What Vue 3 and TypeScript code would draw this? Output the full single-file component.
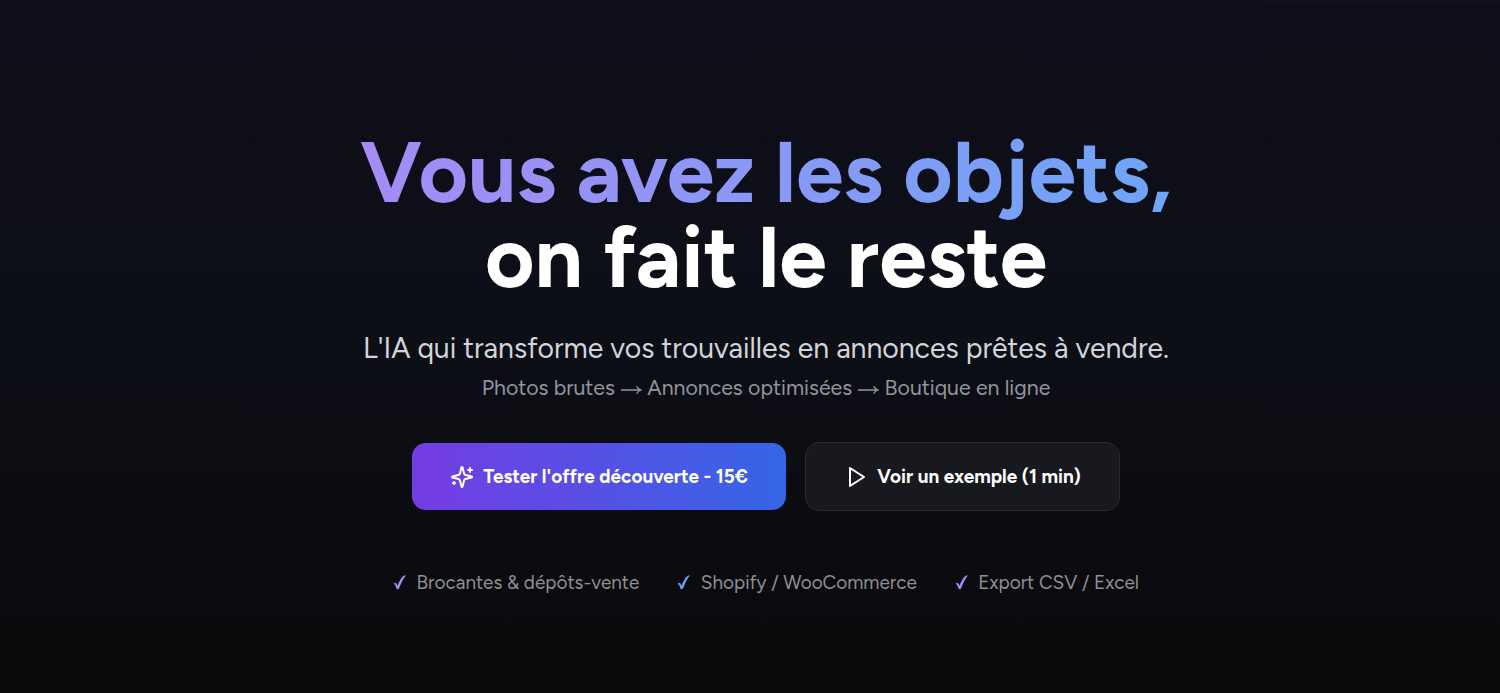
<template>
  <section class="hero">
    <div class="hero-nav-edge"></div>
    <div class="hero-content">
      <h1 class="hero-title">
        <span class="hero-title-accent">Vous avez les objets,</span>
        <span class="hero-title-main">on fait le reste</span>
      </h1>

      <p class="hero-lead">L'IA qui transforme vos trouvailles en annonces prêtes à vendre.</p>
      <p class="hero-steps">
        <template v-for="(step, index) in steps" :key="step">
          <svg v-if="index > 0" class="hero-arrow" viewBox="0 0 22 12" fill="none" stroke="currentColor" stroke-width="1.3">
            <path d="M1 6H20.8M16.6 2.4C17.6 4.2 19 5.4 21 6C19 6.6 17.6 7.8 16.6 9.6" />
          </svg>
          <span>{{ step }}</span>
        </template>
      </p>

      <div class="hero-actions">
        <button class="btn btn-primary" type="button">
          <svg class="btn-icon" viewBox="0 0 24 24" fill="none" stroke="currentColor" stroke-width="2" stroke-linecap="round" stroke-linejoin="round">
            <path d="M9.937 15.5A2 2 0 0 0 8.5 14.063l-6.135-1.582a.5.5 0 0 1 0-.962L8.5 9.936A2 2 0 0 0 9.937 8.5l1.582-6.135a.5.5 0 0 1 .963 0L14.063 8.5A2 2 0 0 0 15.5 9.937l6.135 1.581a.5.5 0 0 1 0 .964L15.5 14.063a2 2 0 0 0-1.437 1.437l-1.582 6.135a.5.5 0 0 1-.963 0z" />
            <path d="M20 3v4M22 5h-4M4 17v2M5 18H3" />
          </svg>
          <span>Tester l'offre découverte - 15€</span>
        </button>
        <button class="btn btn-secondary" type="button">
          <svg class="btn-icon" viewBox="0 0 24 24" fill="none" stroke="currentColor" stroke-width="2" stroke-linecap="round" stroke-linejoin="round">
            <path d="M6 3l14 9-14 9V3z" />
          </svg>
          <span>Voir un exemple (1 min)</span>
        </button>
      </div>

      <ul class="hero-features">
        <li v-for="feature in features" :key="feature.label" class="hero-feature">
          <svg class="hero-check" :class="feature.tone" viewBox="0 0 13 15" fill="currentColor">
            <path d="M0.6 8.6C1.8 7.5 3.2 7.8 3.8 9.1L4.5 10.7C6.2 6.2 8.4 2.6 10.4 0.9C11.1 0.4 11.9 0.4 12.8 0.5C9.9 4.2 7.8 8.7 6 13.5C5.5 14.3 4.4 14.4 3.7 14C3 11.7 2.2 9.8 0.6 8.6Z" />
          </svg>
          <span>{{ feature.label }}</span>
        </li>
      </ul>
    </div>
  </section>
</template>

<script setup lang="ts">
interface Feature {
  label: string
  tone: "violet" | "blue"
}

const steps: string[] = ["Photos brutes", "Annonces optimisées", "Boutique en ligne"]

const features: Feature[] = [
  { label: "Brocantes & dépôts-vente", tone: "violet" },
  { label: "Shopify / WooCommerce", tone: "blue" },
  { label: "Export CSV / Excel", tone: "violet" },
]
</script>

<style>
body {
  margin: 0;
  background: #09090b;
}
</style>

<style scoped>
.hero {
  position: relative;
  box-sizing: border-box;
  height: 693px;
  padding: 130px 0 0 32px;
  overflow: hidden;
  background: linear-gradient(180deg, #0f0d19 0%, #0d0f18 40%, #0c0d12 68%, #0a0a0c 100%);
  color: #fff;
  font-family: Figtree, Lato, "Open Sans", sans-serif;
}

.hero-nav-edge {
  position: absolute;
  top: 0;
  right: 0;
  width: 235px;
  height: 5px;
  background: #130f20;
}

.hero-content {
  display: flex;
  flex-direction: column;
  align-items: center;
  white-space: nowrap;
}

.hero-title {
  display: flex;
  flex-direction: column;
  align-items: center;
  margin: 0;
  font-size: 85.3px;
  line-height: 85.3px;
  font-weight: 700;
}

/* extra room below so the clipped background covers the "j" descender */
.hero-title-accent {
  padding-bottom: 8px;
  margin-bottom: -8px;
  background: linear-gradient(90deg, #a58bf6, #6ea5f6);
  background-clip: text;
  -webkit-background-clip: text;
  color: transparent;
}

.hero-lead {
  margin: 27.2px 0 0;
  color: #d1d5db;
  font-size: 28.4px;
  line-height: 40px;
}

.hero-steps {
  display: flex;
  align-items: center;
  gap: 5.2px;
  margin: 4.4px 0 0;
  color: #9096a0;
  font-size: 21.3px;
  line-height: 32px;
}

.hero-arrow {
  width: 22px;
  height: 12px;
  margin-top: 3px;
}

.hero-actions {
  display: flex;
  align-items: center;
  gap: 19px;
  margin-top: 37.8px;
}

.btn {
  display: flex;
  align-items: center;
  justify-content: center;
  box-sizing: border-box;
  gap: 9px;
  padding: 2px 0 0;
  border: 0;
  border-radius: 14px;
  color: #fff;
  font-family: inherit;
  font-size: 18.96px;
  font-weight: 700;
  line-height: 28px;
}

.btn-primary {
  width: 374px;
  height: 67px;
  background: linear-gradient(90deg, #763ce4, #3565e6);
}

.btn-secondary {
  width: 315px;
  height: 69px;
  border: 1px solid #2a2b30;
  background: #18191e;
}

.btn-icon {
  width: 24px;
  height: 24px;
}

.hero-features {
  display: flex;
  gap: 38px;
  margin: 57.6px 0 0;
  padding: 0;
  list-style: none;
  color: #8e8f94;
  font-size: 18.96px;
  line-height: 28px;
}

.hero-feature {
  display: flex;
  align-items: center;
  gap: 10.5px;
}

.hero-check {
  width: 13px;
  height: 15px;
}

.violet {
  color: #a78bfa;
}

.blue {
  color: #60a5fa;
}
</style>
